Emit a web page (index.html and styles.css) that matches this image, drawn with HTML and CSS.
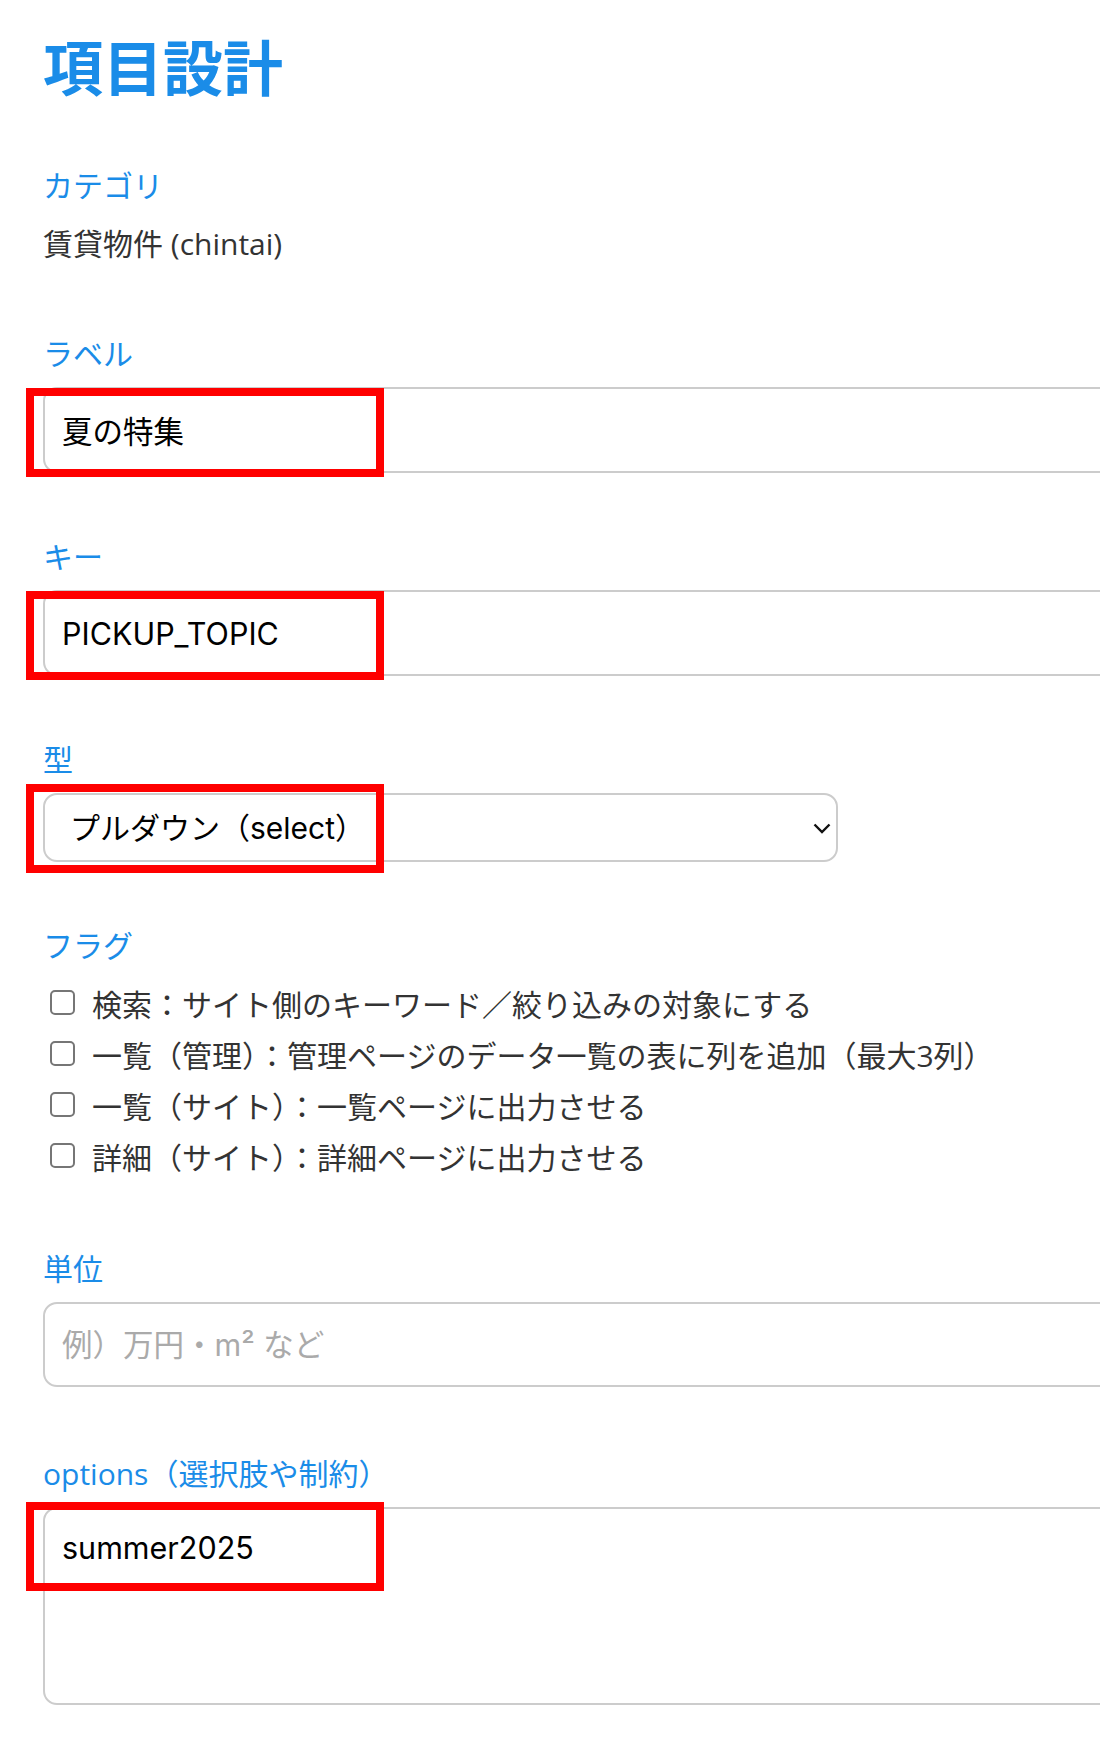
FILE: index.html
```html
<!DOCTYPE html>
<html lang="ja">
<head>
<meta charset="utf-8">
<title>項目設計</title>
<link rel="stylesheet" href="styles.css">
</head>
<body>
<div class="page">
  <h1 class="title">項目設計</h1>

  <div class="field field-category">
    <div class="label label-category">カテゴリ</div>
    <div class="value">賃貸物件 (chintai)</div>
  </div>

  <div class="field">
    <label class="label" for="f-label">ラベル</label>
    <div class="control">
      <input id="f-label" class="input" type="text" value="夏の特集">
      <span class="mark mark-input"></span>
    </div>
  </div>

  <div class="field">
    <label class="label" for="f-key">キー</label>
    <div class="control">
      <input id="f-key" class="input" type="text" value="PICKUP_TOPIC">
      <span class="mark mark-input"></span>
    </div>
  </div>

  <div class="field">
    <label class="label" for="f-type">型</label>
    <div class="control control-select">
      <select id="f-type" class="select">
        <option>プルダウン（select）</option>
      </select>
      <svg class="chevron" width="18" height="11" viewBox="0 0 18 11" aria-hidden="true"><path d="M1.5 1.5 L9 9 L16.5 1.5" fill="none" stroke="#111" stroke-width="2.4"/></svg>
      <span class="mark mark-select"></span>
    </div>
  </div>

  <div class="field">
    <div class="label label-flags">フラグ</div>
    <div class="checks">
      <label class="check"><input type="checkbox" class="checkbox"><span>検索：サイト側のキーワード／絞り込みの対象にする</span></label>
      <label class="check"><input type="checkbox" class="checkbox"><span>一覧（管理）：管理ページのデータ一覧の表に列を追加（最大3列）</span></label>
      <label class="check"><input type="checkbox" class="checkbox"><span>一覧（サイト）：一覧ページに出力させる</span></label>
      <label class="check"><input type="checkbox" class="checkbox"><span>詳細（サイト）：詳細ページに出力させる</span></label>
    </div>
  </div>

  <div class="field field-unit">
    <label class="label" for="f-unit">単位</label>
    <div class="control">
      <input id="f-unit" class="input input-unit" type="text" placeholder="例）万円・m² など">
    </div>
  </div>

  <div class="field field-options">
    <label class="label" for="f-options">options（選択肢や制約）</label>
    <div class="control">
      <textarea id="f-options" class="textarea">summer2025</textarea>
      <span class="mark mark-textarea"></span>
    </div>
  </div>
</div>
</body>
</html>
```

FILE: styles.css
```css
* {
  box-sizing: border-box;
}

html,
body {
  margin: 0;
  background: #ffffff;
}

body {
  font-family: "Open Sans", "Noto Sans CJK JP", sans-serif;
  color: #333333;
}

.page {
  padding: 32px 0 40px 43px;
  overflow: hidden;
}

.title {
  margin: 0 0 62px;
  font-size: 60px;
  line-height: 72px;
  font-weight: 700;
  color: #1a8ce8;
}

.field {
  margin-bottom: 64px;
}

.field-category {
  margin-bottom: 70px;
}

.field-unit {
  margin-top: 68px;
}

.field-options {
  margin-top: 67px;
}

.label {
  display: block;
  margin-bottom: 13px;
  font-size: 30px;
  line-height: 40px;
  font-weight: 400;
  color: #1a8ce8;
}

.label-category {
  margin-bottom: 18px;
}

.label-flags {
  margin-bottom: 11px;
}

.value {
  font-size: 30px;
  line-height: 40px;
  color: #333333;
}

.control {
  position: relative;
}

.input {
  display: block;
  width: 1100px;
  height: 86px;
  margin: 0;
  padding: 0 17px;
  border: 2px solid #cccccc;
  border-radius: 14px;
  background: #ffffff;
  font-family: "Inter", "Noto Sans CJK JP", sans-serif;
  font-size: 30.5px;
  color: #000000;
  outline: none;
}

.input-unit {
  height: 85px;
}

.input::placeholder {
  color: #aaaaaa;
}

.control-select {
  width: 795px;
}

.select {
  display: block;
  width: 795px;
  height: 69px;
  margin: 0;
  padding: 0 0 0 25px;
  border: 2px solid #cccccc;
  border-radius: 14px;
  background: #ffffff;
  font-family: "Inter", "Noto Sans CJK JP", sans-serif;
  font-size: 30px;
  color: #000000;
  -webkit-appearance: none;
  appearance: none;
  outline: none;
}

.chevron {
  position: absolute;
  right: 7px;
  top: 30px;
  pointer-events: none;
}

.checks {
  display: flex;
  flex-direction: column;
}

.check {
  display: flex;
  align-items: center;
  gap: 17px;
  height: 51px;
  padding-left: 7px;
  font-size: 30px;
  color: #333333;
}

.checkbox {
  flex: none;
  width: 25px;
  height: 25px;
  margin: 0;
  border: 2px solid #767676;
  border-radius: 5px;
  background: #ffffff;
  -webkit-appearance: none;
  appearance: none;
}

.textarea {
  display: block;
  width: 1100px;
  height: 198px;
  margin: 0;
  padding: 19px 17px;
  border: 2px solid #cccccc;
  border-radius: 14px;
  background: #ffffff;
  font-family: "Inter", "Noto Sans CJK JP", sans-serif;
  font-size: 30.5px;
  line-height: 40px;
  color: #000000;
  resize: none;
  outline: none;
}

.mark {
  position: absolute;
  left: -17px;
  width: 358px;
  height: 89px;
  border: 8px solid #ff0000;
  pointer-events: none;
}

.mark-input {
  top: 1px;
}

.mark-select {
  top: -9px;
}

.mark-textarea {
  top: -5px;
}
```
